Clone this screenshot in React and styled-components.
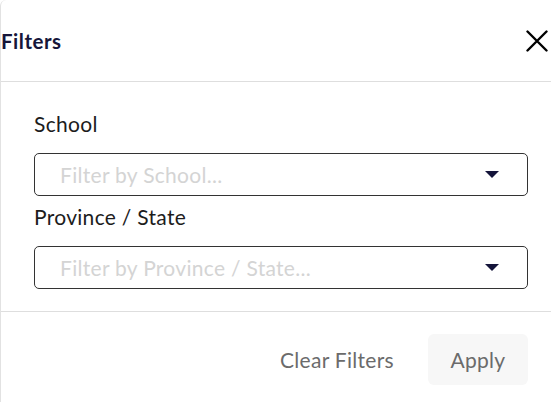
import React from 'react'
import styled, { createGlobalStyle } from 'styled-components'

const GlobalStyle = createGlobalStyle`
  html, body {
    margin: 0;
    padding: 0;
    background: #ffffff;
    overflow: hidden;
  }
  body {
    font-family: Lato, "Open Sans", Arial, sans-serif;
  }
`

const Dialog = styled.div`
  width: 561px;
  height: 402px;
  background: #fff;
  border-left: 1px solid #e2e2e2;
  border-top-left-radius: 6px;
  display: flex;
  flex-direction: column;
  box-sizing: border-box;
`

const Header = styled.div`
  height: 82px;
  display: flex;
  align-items: center;
  justify-content: space-between;
  padding: 0 12px 0 0;
  border-bottom: 1px solid #dedede;
  box-sizing: border-box;
`

const Title = styled.h2`
  margin: 0;
  font-size: 20.5px;
  font-weight: 700;
  color: #16163a;
  letter-spacing: 0.5px;
`

const CloseButton = styled.button`
  border: none;
  background: none;
  padding: 0;
  width: 24px;
  height: 24px;
  display: flex;
  align-items: center;
  justify-content: center;
  cursor: pointer;
`

const Body = styled.div`
  padding: 30px 33px 22px 33px;
  display: flex;
  flex-direction: column;
  border-bottom: 1px solid #dedede;
`

const Label = styled.label`
  font-size: 21px;
  letter-spacing: 0.3px;
  color: #1c1c1c;
  line-height: 24px;
  margin-bottom: 17px;
`

const Select = styled.div`
  height: 43px;
  border: 1.5px solid #333;
  border-radius: 5px;
  display: flex;
  align-items: center;
  justify-content: space-between;
  padding: 0 28px 0 25px;
  box-sizing: border-box;
  margin-bottom: ${({ $gap }) => $gap}px;
`

const Placeholder = styled.span`
  font-size: 21px;
  letter-spacing: 0.3px;
  color: #d4d4d4;
`

const Footer = styled.div`
  display: flex;
  justify-content: flex-end;
  align-items: center;
  gap: 34px;
  padding: 22px 33px 0 0;
`

const TextButton = styled.button`
  border: none;
  background: none;
  font-family: inherit;
  font-size: 21px;
  letter-spacing: 0.3px;
  color: #6b6b6b;
  padding: 0;
  cursor: pointer;
`

const ApplyButton = styled.button`
  border: none;
  background: #f7f7f7;
  border-radius: 6px;
  width: 100px;
  height: 51px;
  font-family: inherit;
  font-size: 21px;
  letter-spacing: 0.3px;
  color: #6b6b6b;
  cursor: pointer;
`

const Caret = () => (
  <svg width="14" height="7" viewBox="0 0 14 7">
    <path d="M0 0 H14 L7 7 Z" fill="#14143a" />
  </svg>
)

const CloseIcon = () => (
  <svg width="22" height="22" viewBox="0 0 22 22">
    <path d="M1.5 1.5 L20.5 20.5 M20.5 1.5 L1.5 20.5" stroke="#000" strokeWidth="2.4" strokeLinecap="round" />
  </svg>
)

const filters = [
  { label: 'School', placeholder: 'Filter by School...' },
  { label: 'Province / State', placeholder: 'Filter by Province / State...' },
]

export default function App() {
  return (
    <>
      <GlobalStyle />
      <Dialog>
        <Header>
          <Title>Filters</Title>
          <CloseButton aria-label="Close">
            <CloseIcon />
          </CloseButton>
        </Header>
        <Body>
          {filters.map((f, i) => (
            <React.Fragment key={f.label}>
              <Label>{f.label}</Label>
              <Select $gap={i === 0 ? 9 : 0}>
                <Placeholder>{f.placeholder}</Placeholder>
                <Caret />
              </Select>
            </React.Fragment>
          ))}
        </Body>
        <Footer>
          <TextButton>Clear Filters</TextButton>
          <ApplyButton>Apply</ApplyButton>
        </Footer>
      </Dialog>
    </>
  )
}
